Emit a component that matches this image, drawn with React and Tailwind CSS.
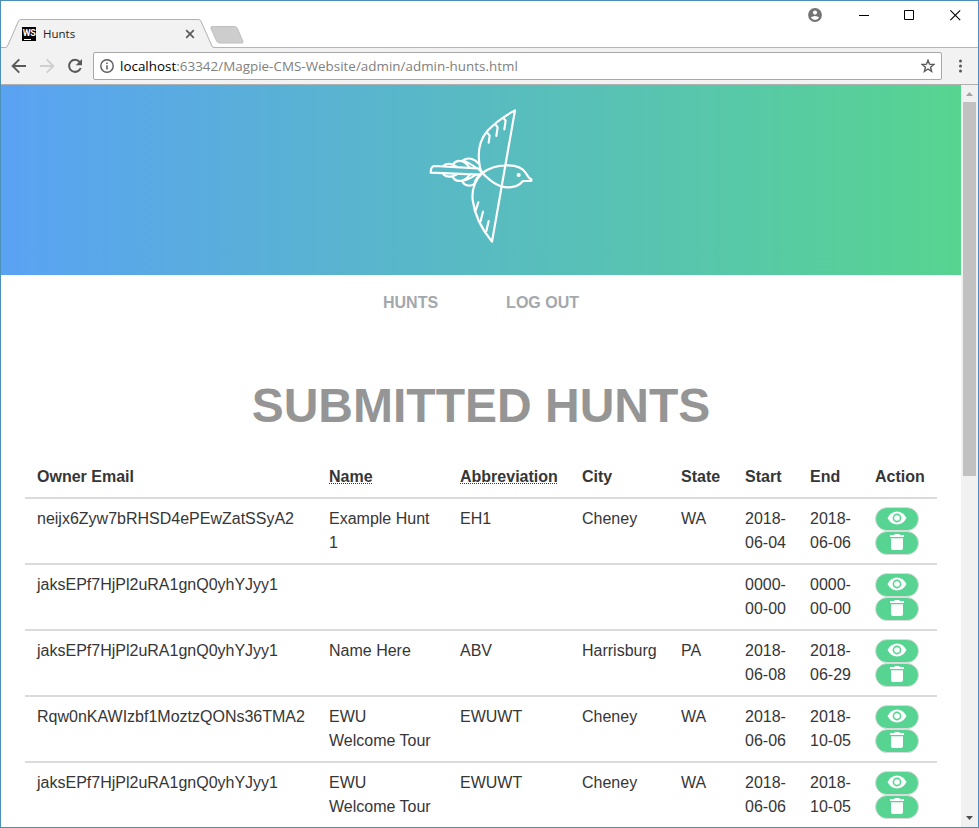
import React from "react";

const hunts = [
  { owner: "neijx6Zyw7bRHSD4ePEwZatSSyA2", name: "Example Hunt 1", abbr: "EH1", city: "Cheney", state: "WA", start: "2018-06-04", end: "2018-06-06" },
  { owner: "jaksEPf7HjPl2uRA1gnQ0yhYJyy1", name: "", abbr: "", city: "", state: "", start: "0000-00-00", end: "0000-00-00" },
  { owner: "jaksEPf7HjPl2uRA1gnQ0yhYJyy1", name: "Name Here", abbr: "ABV", city: "Harrisburg", state: "PA", start: "2018-06-08", end: "2018-06-29" },
  { owner: "Rqw0nKAWIzbf1MoztzQONs36TMA2", name: "EWU Welcome Tour", abbr: "EWUWT", city: "Cheney", state: "WA", start: "2018-06-06", end: "2018-10-05" },
  { owner: "jaksEPf7HjPl2uRA1gnQ0yhYJyy1", name: "EWU Welcome Tour", abbr: "EWUWT", city: "Cheney", state: "WA", start: "2018-06-06", end: "2018-10-05" },
];

function TabStrip() {
  return (
    <div className="flex h-[47px] shrink-0 items-start justify-between bg-white shadow-[inset_0_-1px_0_#b5b5b5]">
      <div className="flex pt-[18px]">
        <div className="relative h-[29px] w-[213px]">
          <svg className="absolute inset-0" width="213" height="29" viewBox="0 0 213 29">
            <path d="M0 29V28.5H4.5Q6 28.5 7 26L17.5 2Q18.5 .5 20 .5H197Q199 .5 199.8 2L210.5 26Q211.500 28.5 213 28.5V29Z" fill="#f2f2f2" />
            <path d="M0 28.5H4.5Q6 28.5 7 26L17.5 2Q18.5 .5 20 .5H197Q199 .5 199.8 2L210.5 26Q211.500 28.5 213 28.5" fill="none" stroke="#b0b0b0" />
          </svg>
          <div className="relative flex h-[29px] items-center pl-[21px] pr-[18px]">
            <span className="flex h-[14px] w-[14px] flex-col items-center bg-black pt-[2px]">
              <span className="-mx-1 text-center font-[Roboto,sans-serif] text-[9px] leading-[8px] font-bold tracking-[-0.4px] text-white">WS</span>
              <span className="mt-[2px] mr-[3px] h-px w-[7px] shrink-0 bg-white" />
            </span>
            <span className="ml-[7px] grow text-[11.5px] leading-4 text-[#222]">Hunts</span>
            <svg width="10" height="10" viewBox="0 0 10 10" className="mr-px">
              <path d="M1.200 1.200L8.800 8.800M8.800 1.200L1.200 8.800" stroke="#5a5a5a" strokeWidth="1.700" />
            </svg>
          </div>
        </div>
        <svg width="36" height="19" viewBox="0 0 36 19" className="-ml-[5px] mt-[6px]">
          <path d="M3 1.500H25.500Q27.500 1.500 28.500 3.500L34 16.500Q34.500 18 33 18H11Q8.500 18 7.500 16L2 3.500Q1.300 1.500 3 1.500Z" fill="#cdcdcd" stroke="#c0c0c0" />
        </svg>
      </div>
      <div className="flex h-7 items-center">
        <svg width="14" height="14" viewBox="0 0 14 14" className="mr-[37px]">
          <circle cx="7" cy="7" r="6.900" fill="#737373" />
          <circle cx="7" cy="4.600" r="2.100" fill="#fff" />
          <path d="M2.800 9.600Q4.500 7.900 7 7.900T11.200 9.600Q9.800 12 7 12T2.800 9.600Z" fill="#fff" />
        </svg>
        <svg width="10" height="10" viewBox="0 0 10 10" className="mr-[35px]"><path d="M0 5.500H10" stroke="#000" /></svg>
        <svg width="11" height="11" viewBox="0 0 11 11" className="mr-[35px]"><path d="M.5 .5H9.500V9.500H.5Z" fill="none" stroke="#000" /></svg>
        <svg width="11" height="11" viewBox="0 0 11 11" className="mr-[17px]"><path d="M.4 .4L10.200 10.200M10.200 .4L.4 10.200" stroke="#000" strokeWidth="1.100" /></svg>
      </div>
    </div>
  );
}

function Toolbar() {
  return (
    <div className="flex h-[37px] shrink-0 items-center border-b border-[#b0b0b0] bg-[#f2f2f2]">
      <svg width="92" height="36" viewBox="1 48 92 36" fill="none">
        <path d="M26 66H13M19.300 59.300L12.600 66L19.300 72.700" stroke="#595959" strokeWidth="1.900" />
        <path d="M40 66H53M46.700 59.300L53.400 66L46.700 72.700" stroke="#cfcfcf" strokeWidth="1.900" />
        <path d="M79.700 62A6 6 0 1 0 80.700 68" stroke="#595959" strokeWidth="2" />
        <path d="M82 59V65.300H75.700Z" fill="#595959" />
      </svg>
      <div className="flex h-7 w-[849px] items-center rounded-[2px] border border-[#a8a8a8] bg-white pl-[6px] pr-[6px]">
        <svg width="14" height="14" viewBox="0 0 14 14">
          <circle cx="7" cy="7" r="6.200" fill="none" stroke="#5a5a5a" strokeWidth="1.400" />
          <path d="M7 6.200V10.400M7 3.500V5" stroke="#5a5a5a" strokeWidth="1.500" />
        </svg>
        <span className="ml-[6px] grow text-[13.4px] leading-5 tracking-[0.02px] text-[#808080]"><span className="text-black">localhost</span>:63342/Magpie-CMS-Website/admin/admin-hunts.html</span>
        <svg width="14" height="14" viewBox="0 0 14 14">
          <path d="M7 1.300L8.500 5.200L12.900 5.500L9.500 8.200L10.600 12.400L7 10L3.400 12.400L4.500 8.200L1.100 5.500L5.500 5.200Z" fill="none" stroke="#5a5a5a" strokeWidth="1.400" />
        </svg>
      </div>
      <svg width="4" height="14" viewBox="0 0 4 14" className="ml-[16px]" fill="#5a5a5a">
        <circle cx="2.500" cy="2" r="1.500" /><circle cx="2.500" cy="7" r="1.500" /><circle cx="2.500" cy="12" r="1.500" />
      </svg>
    </div>
  );
}

function Magpie() {
  return (
    <svg width="104" height="138" viewBox="27 36 312 414" fill="none" stroke="#fff" strokeWidth="6.500" strokeLinecap="round" strokeLinejoin="round">
      <path d="M178 205C173 170 179 135 202 108C226 82 255 62 285 46L216 440C189 407 164 365 158 315C155 286 163 258 187 234C181 224 178 216 178 205Z" />
      <path d="M201 112L209 122L206 143M226 88L233 97L229 123M250 69L257 77L253 103" />
      <path d="M167 346L175 322M182 378L189 350M199 408L206 378" />
      <path d="M187 234C209 218 232 211 258 211C286 210 309 218 319 236C323 244 327 250 334 253V258H309C299 270 284 277 266 277C235 278 211 258 187 234Z" />
      <circle cx="296" cy="240" r="3" fill="#fff" />
      <path d="M187 234L174 220L44 213C37 213 32 221 32 233L174 239L187 234Z" />
      <path d="M71 212C81 203 95 205 111 216M99 208C109 194 130 192 149 218M128 196C143 186 163 190 175 205M131 196C148 205 159 211 169 219" />
      <path d="M71 239C80 247 92 247 109 239M98 244C105 263 130 262 148 241M126 257C132 274 155 276 164 265C165 255 170 248 181 238M126 257C146 255 156 246 168 239" />
    </svg>
  );
}

const buttonClass = "flex h-6 w-[44px] items-center justify-center rounded-full border border-[#dbdbdb] bg-[#57d491]";

function Actions() {
  return (
    <div className="flex flex-col">
      <button aria-label="View" className={buttonClass}>
        <svg width="20" height="14" viewBox="0 0 20 14" className="-mt-[2px]">
          <path d="M.5 7Q4 .5 10 .5T19.500 7Q16 13.500 10 13.500T.5 7Z" fill="#fff" />
          <circle cx="10" cy="7" r="3.600" fill="#fff" stroke="#57d491" strokeWidth="1.600" />
        </svg>
      </button>
      <button aria-label="Delete" className={buttonClass}>
        <svg width="14" height="16" viewBox="0 0 14 16" className="-mt-[2px]" fill="#fff">
          <path d="M0 1H4L5 0H9L10 1H14V3H0ZM1 4.200H13V14Q13 16 11 16H3Q1 16 1 14Z" />
        </svg>
      </button>
    </div>
  );
}

function HuntsTable() {
  const abbr = "underline decoration-dotted decoration-1 underline-offset-[1px] [text-decoration-skip-ink:none]";
  return (
    <table className="w-[912px] table-fixed border-collapse text-left align-top text-[16px] leading-6 text-[#363636]">
      <colgroup>
        <col className="w-[292px]" />
        <col className="w-[131px]" />
        <col className="w-[122px]" />
        <col className="w-[99px]" />
        <col className="w-[64px]" />
        <col className="w-[65px]" />
        <col className="w-[65px]" />
        <col className="w-[74px]" />
      </colgroup>
      <thead>
        <tr className="border-b-2 border-[#dbdbdb] [&>th]:px-3 [&>th]:py-2">
          <th>Owner Email</th>
          <th><span className={abbr}>Name</span></th>
          <th><span className={abbr}>Abbreviation</span></th>
          <th>City</th>
          <th>State</th>
          <th>Start</th>
          <th>End</th>
          <th>Action</th>
        </tr>
      </thead>
      <tbody>
        {hunts.map((h, i) => (
          <tr key={i} className="border-b-2 border-[#dbdbdb] [&>td]:px-3 [&>td]:py-2 [&>td]:align-top">
            <td>{h.owner}</td>
            <td>{h.name}</td>
            <td>{h.abbr}</td>
            <td>{h.city}</td>
            <td>{h.state}</td>
            <td>{h.start}</td>
            <td>{h.end}</td>
            <td><Actions /></td>
          </tr>
        ))}
      </tbody>
    </table>
  );
}

function Scrollbar() {
  return (
    <div className="flex w-[17px] shrink-0 flex-col items-center justify-between bg-[#f1f1f1]">
      <div className="flex flex-col items-center">
        <svg width="17" height="17" viewBox="0 0 17 17"><path d="M5 11L8.500 7L12 11Z" fill="#a3a3a3" /></svg>
        <div className="h-[374px] w-[13px] bg-[#c1c1c1]" />
      </div>
      <svg width="17" height="17" viewBox="0 0 17 17"><path d="M5 6L8.500 10L12 6Z" fill="#505050" /></svg>
    </div>
  );
}

export default function App() {
  return (
    <div className="flex h-[828px] w-[979px] flex-col overflow-hidden border border-[#4a90b8] bg-white font-['Open_Sans','Noto_Sans',sans-serif]">
      <TabStrip />
      <Toolbar />
      <div className="flex min-h-0 grow">
        <main className="flex w-[960px] shrink-0 flex-col items-center overflow-hidden bg-white font-['Liberation_Sans',Arial,sans-serif]">
          <header className="flex h-[190px] w-full shrink-0 justify-center bg-linear-to-r/srgb from-[#5aa2f3] to-[#57d490] pt-[22px]">
            <Magpie />
          </header>
          <nav className="flex shrink-0 gap-[68px] pt-[16px] text-[16px] leading-6 font-bold text-[#a3a8ad]">
            <a>HUNTS</a>
            <a>LOG OUT</a>
          </nav>
          <h1 className="mt-[64px] shrink-0 text-[48px] leading-[54px] font-bold text-[#959595]">SUBMITTED HUNTS</h1>
          <div className="mt-[24px] shrink-0">
            <HuntsTable />
          </div>
        </main>
        <Scrollbar />
      </div>
    </div>
  );
}
